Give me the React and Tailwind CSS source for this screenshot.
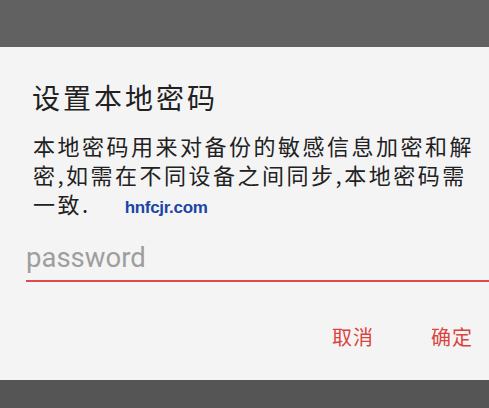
export default function App() {
  const cjk = { fontFamily: '"Noto Sans CJK SC", "Noto Sans", sans-serif' };

  return (
    <div className="h-[408px] w-[489px] overflow-hidden flex flex-col bg-[#555555]" style={cjk}>
      <div className="h-[47px] shrink-0 bg-[#616161]" />

      {/* Dialog */}
      <div className="h-[333px] shrink-0 bg-[#f4f4f4] pl-[33px] pt-[32px] flex flex-col">
        <h1 className="-ml-[1px] text-[28px] leading-[37px] tracking-[3px] text-[#212121] font-normal">设置本地密码</h1>

        <div className="mt-[15px] w-[452px] text-[22px] leading-[29px] tracking-[2.5px] text-[#212121]">
          <p>本地密码用来对备份的敏感信息加密和解密,如需在不同设备之间同步,本地密码需</p>
          <div className="flex items-baseline">
            <span>一致.</span>
            <span className="ml-[34px] font-['Liberation_Sans',sans-serif] text-[17px] font-bold tracking-[-0.3px] text-[#1b44a6]">
              hnfcjr.com
            </span>
          </div>
        </div>

        <div className="mt-[20px] -ml-[7px] border-b-2 border-[#e04a4a] pb-[6px]">
          <input
            type="password"
            placeholder="password"
            className="w-full bg-transparent outline-none font-['Roboto',sans-serif] text-[27.5px] leading-[32px] h-[32px] placeholder:text-[#9e9e9e]"
          />
        </div>

        <div className="mt-[41px] flex justify-end gap-[57px] pr-[16px] text-[20px] leading-[28px] tracking-[1px] text-[#d9443e]">
          <button>取消</button>
          <button>确定</button>
        </div>
      </div>

      <div className="flex-1 bg-[#555555]" />
    </div>
  );
}
